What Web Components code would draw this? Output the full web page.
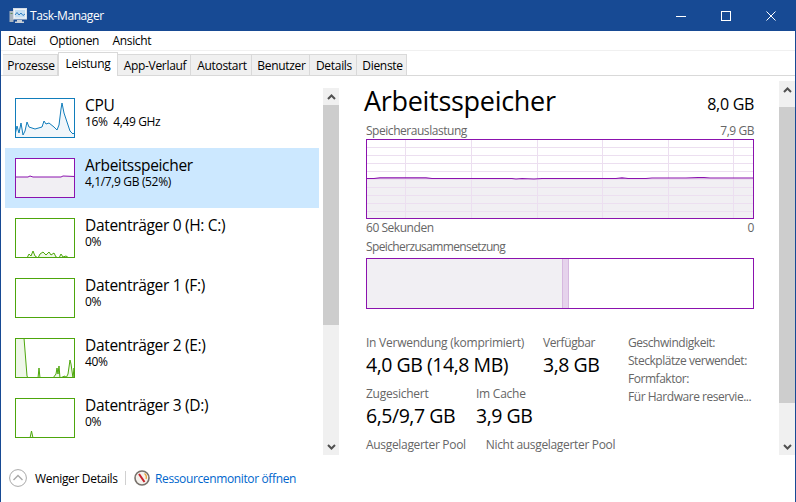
<!DOCTYPE html>
<html lang="de">
<head>
<meta charset="utf-8">
<title>Task-Manager</title>
<style>
  html, body { margin: 0; padding: 0; background: #fff; }
  body { font-family: "Open Sans", "Noto Sans", sans-serif; font-size: 12px; color: #000; }
</style>
</head>
<body>
<task-manager></task-manager>

<script>
const FONT = `"Open Sans", "Noto Sans", sans-serif`;

class TmTitlebar extends HTMLElement {
  connectedCallback() {
    this.attachShadow({ mode: "open" }).innerHTML = `
      <style>
        :host { display: flex; align-items: center; height: 31px; background: #174a94; color: #fff; font: 12px ${FONT}; letter-spacing: -0.42px; }
        svg { display: block; }
        .icon { margin-left: 8px; }
        .title { margin-left: 3px; flex: 1; }
        .btn { width: 45px; height: 31px; display: flex; align-items: center; justify-content: center; }
        .btn:last-child { margin-right: 1px; width: 46px; }
      </style>
      <svg class="icon" width="18" height="16" viewBox="0 0 18 16">
        <rect x="0.5" y="3" width="4" height="11" fill="#a9b4c0"/>
        <rect x="1.5" y="5" width="2" height="1" fill="#5d8f5a"/>
        <rect x="4.5" y="0.5" width="13" height="10.5" fill="#eef3f8" stroke="#d5dde6"/>
        <rect x="6" y="2" width="10" height="7.5" fill="#c5def2"/>
        <path d="M6 7 8 4.5 10 7 12 5 14 7.5 16 6" fill="none" stroke="#2f7fc4"/>
        <path d="M8 12h5v1.5h2V15H6v-1.5h2z" fill="#c9d0d8"/>
      </svg>
      <span class="title">Task-Manager</span>
      <div class="btn"><svg width="10" height="10"><path d="M0 5.5h10" stroke="#fff"/></svg></div>
      <div class="btn"><svg width="10" height="10"><rect x=".5" y=".5" width="9" height="9" fill="none" stroke="#fff"/></svg></div>
      <div class="btn"><svg width="10" height="10"><path d="M.5.5l9 9M9.5.5l-9 9" stroke="#fff"/></svg></div>`;
  }
}

class TmMenubar extends HTMLElement {
  connectedCallback() {
    this.attachShadow({ mode: "open" }).innerHTML = `
      <style>
        :host { display: flex; gap: 13.5px; height: 19px; align-items: center; padding: 0 0 0 7px; border-bottom: 1px solid #f0f0f0; font: 12px ${FONT}; letter-spacing: -0.35px; }
      </style>
      <span>Datei</span><span>Optionen</span><span>Ansicht</span>`;
  }
}

class TmTabs extends HTMLElement {
  connectedCallback() {
    const tabs = [["Prozesse", 55], ["Leistung", 60], ["App-Verlauf", 73], ["Autostart", 61], ["Benutzer", 58], ["Details", 47], ["Dienste", 50]];
    const html = tabs.map(([t, w], i) =>
      `<div class="tab ${i === 1 ? "on" : ""}" style="width:${w}px">${t}</div>`).join("");
    this.attachShadow({ mode: "open" }).innerHTML = `
      <style>
        :host { display: flex; align-items: flex-end; height: 23px; padding: 1px 0 0 2px; border-bottom: 1px solid #d9d9d9; font: 12px ${FONT}; letter-spacing: -0.3px; }
        .tab { box-sizing: border-box; height: 21px; padding-left: 2px; background: #f0f0f0; border: 1px solid #d9d9d9; border-bottom: 0; border-left-width: 0; display: flex; align-items: center; justify-content: center; }
        .tab:first-child { border-left-width: 1px; }
        .on { height: 24px; padding-left: 0; background: #fff; border-left-width: 1px; margin-bottom: -1px; padding-bottom: 2px; }
      </style>${html}`;
  }
}

class TmScrollbar extends HTMLElement {
  connectedCallback() {
    const thumb = this.getAttribute("thumb");
    const offset = this.getAttribute("offset") || 0;
    this.attachShadow({ mode: "open" }).innerHTML = `
      <style>
        :host { display: flex; flex-direction: column; width: 16px; background: #f0f0f0; }
        .end { height: 17px; flex: none; display: flex; align-items: center; justify-content: center; }
        .thumb { height: ${thumb}px; margin-top: ${offset}px; background: #cdcdcd; flex: none; }
        .rest { flex: 1; }
        svg { display: block; }
      </style>
      <div class="end"><svg width="9" height="6"><path d="M1 5 4.5 1.5 8 5" fill="none" stroke="#505050" stroke-width="2"/></svg></div>
      <div class="thumb"></div>
      <div class="rest"></div>
      <div class="end"><svg width="9" height="6"><path d="M1 1 4.5 4.5 8 1" fill="none" stroke="#505050" stroke-width="2"/></svg></div>`;
  }
}

class TmDevice extends HTMLElement {
  connectedCallback() {
    const color = this.getAttribute("color");
    const fill = this.getAttribute("fill");
    const pts = this.getAttribute("points") || "";
    const shape = pts
      ? `<polygon points="0,40 ${pts} 60,40" fill="${fill}"/><polyline points="${pts}" fill="none" stroke="${color}"/>`
      : "";
    this.attachShadow({ mode: "open" }).innerHTML = `
      <style>
        :host { display: flex; height: 60px; box-sizing: border-box; padding: 10px 0 0 10px; font: 12px ${FONT}; letter-spacing: -0.35px; }
        :host([selected]) { background: #cce8ff; }
        .graph { box-sizing: border-box; width: 60px; height: 40px; background: #fff; border: 1px solid ${color}; overflow: hidden; }
        svg { display: block; margin: -1px; }
        .text { margin-left: 10px; }
        .name { font-size: 15.5px; line-height: 18px; margin-top: -2px; letter-spacing: -0.32px; }
        .sub { line-height: 16px; }
      </style>
      <div class="graph"><svg width="60" height="40" viewBox="0 0 60 40">${shape}</svg></div>
      <div class="text">
        <div class="name">${this.getAttribute("name")}</div>
        <div class="sub">${this.getAttribute("sub")}</div>
      </div>`;
  }
}

class TmSidebar extends HTMLElement {
  connectedCallback() {
    this.attachShadow({ mode: "open" }).innerHTML = `
      <style>
        :host { display: flex; width: 339px; height: 367px; flex: none; }
        .list { width: 314px; margin-left: 5px; overflow: hidden; }
        tm-scrollbar { margin-left: 4px; }
      </style>
      <div class="list"><slot></slot></div>
      <tm-scrollbar thumb="220"></tm-scrollbar>`;
  }
}

class TmStat extends HTMLElement {
  connectedCallback() {
    const spacing = this.getAttribute("spacing") || "-0.25";
    this.attachShadow({ mode: "open" }).innerHTML = `
      <style>
        :host { display: block; font: 12px ${FONT}; }
        .l { color: #666; line-height: 16px; letter-spacing: ${spacing}px; }
        .v { font-size: 19.5px; line-height: 24px; margin-top: 2px; color: #000; white-space: nowrap; }
      </style>
      <div class="l">${this.getAttribute("label")}</div>
      <div class="v">${this.getAttribute("value")}</div>`;
  }
}

class TmDetail extends HTMLElement {
  connectedCallback() {
    const P = "#8b12ae";
    let grid = "";
    for (let y = 8.5; y < 80; y += 8) grid += `<path d="M0 ${y}H388" stroke="#ecdff0"/>`;
    [39, 105, 171, 236, 302, 367].forEach(x => { grid += `<path d="M${x}.5 0V80" stroke="#ecdff0"/>`; });
    const line = "0,39.5 8,39.5 14,38.8 60,38.8 66,39.5 146,39.5 150,40 156,39.5 168,40 176,39.5 250,39.5 256,38.8 262,39.5 280,39.5 286,39 320,39 332,38.6 338,38.6 344,39 388,39";
    this.attachShadow({ mode: "open" }).innerHTML = `
      <style>
        :host { display: block; flex: 1; padding: 0 0 0 25px; font: 12px ${FONT}; letter-spacing: -0.46px; color: #666; }
        svg { display: block; }
        .head { display: flex; justify-content: space-between; align-items: flex-start; width: 390px; color: #000; height: 40px; margin-top: -5px; }
        .head h1 { font-weight: 400; font-size: 27px; line-height: 36px; margin: 0; letter-spacing: -0.3px; }
        .head span { font-size: 16px; line-height: 20px; margin-top: 11px; letter-spacing: -0.3px; }
        .pad { margin-left: 2px; width: 388px; }
        .row { display: flex; justify-content: space-between; line-height: 16px; }
        .box { box-sizing: border-box; height: 80px; border: 1.5px solid ${P}; overflow: hidden; background: #fff; }
        .box svg { margin: -1.5px; }
        .comp { box-sizing: border-box; height: 51px; border: 1.5px solid ${P}; display: flex; margin-top: 3px; }
        .used { width: 194.5px; background: #f1eff3; border-right: 1px solid #d6b8df; }
        .stand { width: 5px; background: #e6d3ec; border-right: 1px solid #d6b8df; }
        .stats { display: grid; grid-template-columns: 110px 67px 85px 1fr; grid-template-rows: 43px 43px 16px; row-gap: 8px; margin-top: 26px; width: 388px; }
        .a { grid-column: 1 / span 2; }
        .b { grid-column: 3; }
        .c { grid-column: 1; }
        .d { grid-column: 2 / span 2; }
        .pool { grid-column: 1 / span 4; display: flex; gap: 20px; line-height: 16px; letter-spacing: -0.32px; }
        .hw { grid-column: 4; grid-row: 1 / span 2; line-height: 18px; margin-top: -1px; white-space: nowrap; }
      </style>
      <div class="head"><h1>Arbeitsspeicher</h1><span>8,0 GB</span></div>
      <div class="pad">
        <div class="row"><span>Speicherauslastung</span><span>7,9 GB</span></div>
        <div class="box">
          <svg width="388" height="80" viewBox="0 0 388 80">
            <rect y="39" width="388" height="41" fill="#f1eff3"/>
            ${grid}
            <polyline points="${line}" fill="none" stroke="${P}" stroke-width="1.2"/>
          </svg>
        </div>
        <div class="row" style="margin-top:1px"><span>60 Sekunden</span><span>0</span></div>
        <div class="row" style="margin-top:3px;letter-spacing:-0.63px"><span>Speicherzusammensetzung</span></div>
        <div class="comp"><div class="used"></div><div class="stand"></div></div>
        <div class="stats">
          <tm-stat class="a" label="In Verwendung (komprimiert)" value="4,0 GB (14,8 MB)"></tm-stat>
          <tm-stat class="b" spacing="-0.4" label="Verfügbar" value="3,8 GB"></tm-stat>
          <div class="hw">Geschwindigkeit:<br>Steckplätze verwendet:<br>Formfaktor:<br>Für Hardware reservie...</div>
          <tm-stat class="c" label="Zugesichert" value="6,5/9,7 GB"></tm-stat>
          <tm-stat class="d" label="Im Cache" value="3,9 GB"></tm-stat>
          <div class="pool"><span>Ausgelagerter Pool</span><span>Nicht ausgelagerter Pool</span></div>
        </div>
      </div>`;
  }
}

class TmFooter extends HTMLElement {
  connectedCallback() {
    this.attachShadow({ mode: "open" }).innerHTML = `
      <style>
        :host { display: flex; align-items: center; height: 20px; padding-left: 9px; font: 12px ${FONT}; letter-spacing: -0.33px; }
        svg { display: block; flex: none; }
        .sep { width: 1px; height: 14px; background: #d0d0d0; margin: 0 8px; }
        a { color: #0066cc; margin-left: 5px; text-decoration: none; letter-spacing: -0.37px; }
        .lbl { margin-left: 8px; width: 82px; white-space: nowrap; }
      </style>
      <svg width="18" height="18" viewBox="0 0 18 18">
        <circle cx="9" cy="9" r="8.4" fill="#fff" stroke="#a8a8a8"/>
        <path d="M4.5 11 9 6.5 13.5 11" fill="none" stroke="#a8a8a8" stroke-width="1.4"/>
      </svg>
      <span class="lbl">Weniger Details</span>
      <span class="sep"></span>
      <svg width="16" height="16" viewBox="0 0 16 16">
        <circle cx="8" cy="8" r="7" fill="#f4f1ec" stroke="#77716b" stroke-width="1.6"/>
        <path d="M10.5 3.5a5 5 0 0 1 1.5 5.5" fill="none" stroke="#e8a33a" stroke-width="1.3"/>
        <path d="M5 4 10.5 12" stroke="#c8232c" stroke-width="2"/>
      </svg>
      <a>Ressourcenmonitor öffnen</a>`;
  }
}

class TaskManager extends HTMLElement {
  connectedCallback() {
    const G = "#4da60c", GF = "#eff7e9";
    this.attachShadow({ mode: "open" }).innerHTML = `
      <style>
        :host { display: flex; flex-direction: column; box-sizing: border-box; width: 796px; height: 502px; border: 1px solid #174a94; border-top: 0; border-bottom: 0; background: #fff; overflow: hidden; }
        .body { display: flex; height: 367px; margin-top: 12px; margin-left: -1px; }
        .rs { width: 16px; height: 374px; margin-top: -7px; flex: none; }
        tm-footer { margin-top: 13px; margin-left: -1px; }
      </style>
      <tm-titlebar></tm-titlebar>
      <tm-menubar></tm-menubar>
      <tm-tabs></tm-tabs>
      <div class="body">
        <tm-sidebar>
          <tm-device name="CPU" sub="16%&nbsp; 4,49 GHz" color="#117dbb" fill="#f1f6fa"
            points="0,37 2,28 4,35 6,25 8,37 10,33 12,24 14,29 20,31 27,29 29,23 31,26 34,25 39,29 42,32 44,27 46,11 47,5 49,15 52,24 55,33 58,36 60,34"></tm-device>
          <tm-device selected name="Arbeitsspeicher" sub="4,1/7,9 GB (52%)" color="#8b12ae" fill="#f1eff3"
            points="0,19 13,19 15,18 18,19 46,19 48,18 60,18.5"></tm-device>
          <tm-device name="Datenträger 0 (H: C:)" sub="0%" color="${G}" fill="${GF}"
            points="0,40 12,40 14,36 16,38 18,33 20,38 23,40 25,36 28,34 31,37 34,34 36,37 39,35 41,39 44,40 46,36 48,39 51,38 54,40 60,40"></tm-device>
          <tm-device name="Datenträger 1 (F:)" sub="0%" color="${G}" fill="${GF}"></tm-device>
          <tm-device name="Datenträger 2 (E:)" sub="40%" color="${G}" fill="${GF}"
            points="0,0 9,0 12,38 13,40 23,40 24,30 25,40 38,40 41,36 42,30 43,36 44,28 45,40 50,38 51,40 53,36 55,22 56,26 58,40 59,30 60,38"></tm-device>
          <tm-device name="Datenträger 3 (D:)" sub="0%" color="${G}" fill="${GF}"
            points="0,40 15,40 16.5,33 18,40 60,40"></tm-device>
        </tm-sidebar>
        <tm-detail></tm-detail>
        <tm-scrollbar class="rs" thumb="296" offset="9"></tm-scrollbar>
      </div>
      <tm-footer></tm-footer>`;
  }
}

customElements.define("tm-titlebar", TmTitlebar);
customElements.define("tm-menubar", TmMenubar);
customElements.define("tm-tabs", TmTabs);
customElements.define("tm-scrollbar", TmScrollbar);
customElements.define("tm-device", TmDevice);
customElements.define("tm-sidebar", TmSidebar);
customElements.define("tm-stat", TmStat);
customElements.define("tm-detail", TmDetail);
customElements.define("tm-footer", TmFooter);
customElements.define("task-manager", TaskManager);
</script>
</body>
</html>
